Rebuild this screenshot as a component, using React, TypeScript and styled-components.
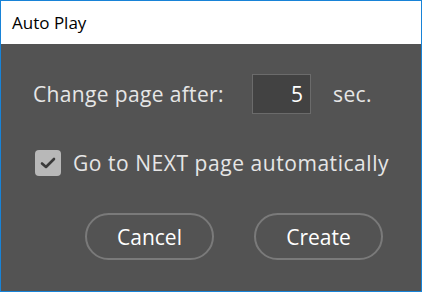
import React from "react";
import styled, { createGlobalStyle } from "styled-components";

const Global = createGlobalStyle`
  html, body { margin: 0; padding: 0; background: #ffffff; }
  * { box-sizing: border-box; }
`;

const Window = styled.div`
  width: 422px;
  height: 292px;
  border: 1px solid #1883d7;
  display: flex;
  flex-direction: column;
  font-family: "Open Sans", "Noto Sans", sans-serif;
`;

const TitleBar = styled.div`
  height: 43px;
  background: #ffffff;
  display: flex;
  align-items: center;
  padding-left: 11px;
  font-size: 17px;
  color: #000000;
`;

const Body = styled.div`
  flex: 1;
  background: #535353;
  padding: 30px 38px 0 32px;
  display: flex;
  flex-direction: column;
  color: #e6e6e6;
`;

const Row = styled.div`
  display: flex;
  align-items: center;
  white-space: nowrap;
`;

const Label = styled.span`
  font-size: 21px;
  width: 219px;
  letter-spacing: 0.35px;
`;

const NumberBox = styled.div`
  width: 59px;
  height: 40px;
  background: #424242;
  border: 1px solid #6b6b6b;
  color: #ffffff;
  font-size: 21px;
  display: flex;
  align-items: center;
  justify-content: flex-end;
  padding-right: 7px;
`;

const Unit = styled.span`
  font-size: 21px;
  margin-left: 22px;
  letter-spacing: 0.4px;
`;

const CheckRow = styled(Row)`
  margin-top: 35px;
  padding-left: 2px;
  gap: 12px;
`;

const Box = styled.span`
  flex: none;
  width: 26px;
  height: 26px;
  border-radius: 4px;
  background: #b8b8b8;
  display: flex;
  align-items: center;
  justify-content: center;
`;

const CheckText = styled.span`
  flex: none;
  font-size: 21px;
  letter-spacing: 0.55px;
`;

const Buttons = styled.div`
  margin-top: 36px;
  display: flex;
  justify-content: flex-end;
  gap: 40px;
`;

const Button = styled.button`
  width: 129px;
  height: 47px;
  border-radius: 24px;
  border: 2px solid #7a7a7a;
  background: transparent;
  color: #ffffff;
  font-family: inherit;
  font-size: 21px;
  padding: 0;
`;

export default function App() {
  return (
    <>
      <Global />
      <Window>
        <TitleBar>Auto Play</TitleBar>
        <Body>
          <Row>
            <Label>Change page after:</Label>
            <NumberBox>5</NumberBox>
            <Unit>sec.</Unit>
          </Row>
          <CheckRow>
            <Box>
              <svg width="16" height="14" viewBox="0 0 16 14">
                <path d="M2 7.5 L6 11 L14 3" fill="none" stroke="#3a3a3a" strokeWidth="2.6" strokeLinecap="round" strokeLinejoin="round" />
              </svg>
            </Box>
            <CheckText>Go to NEXT page automatically</CheckText>
          </CheckRow>
          <Buttons>
            <Button>Cancel</Button>
            <Button>Create</Button>
          </Buttons>
        </Body>
      </Window>
    </>
  );
}
